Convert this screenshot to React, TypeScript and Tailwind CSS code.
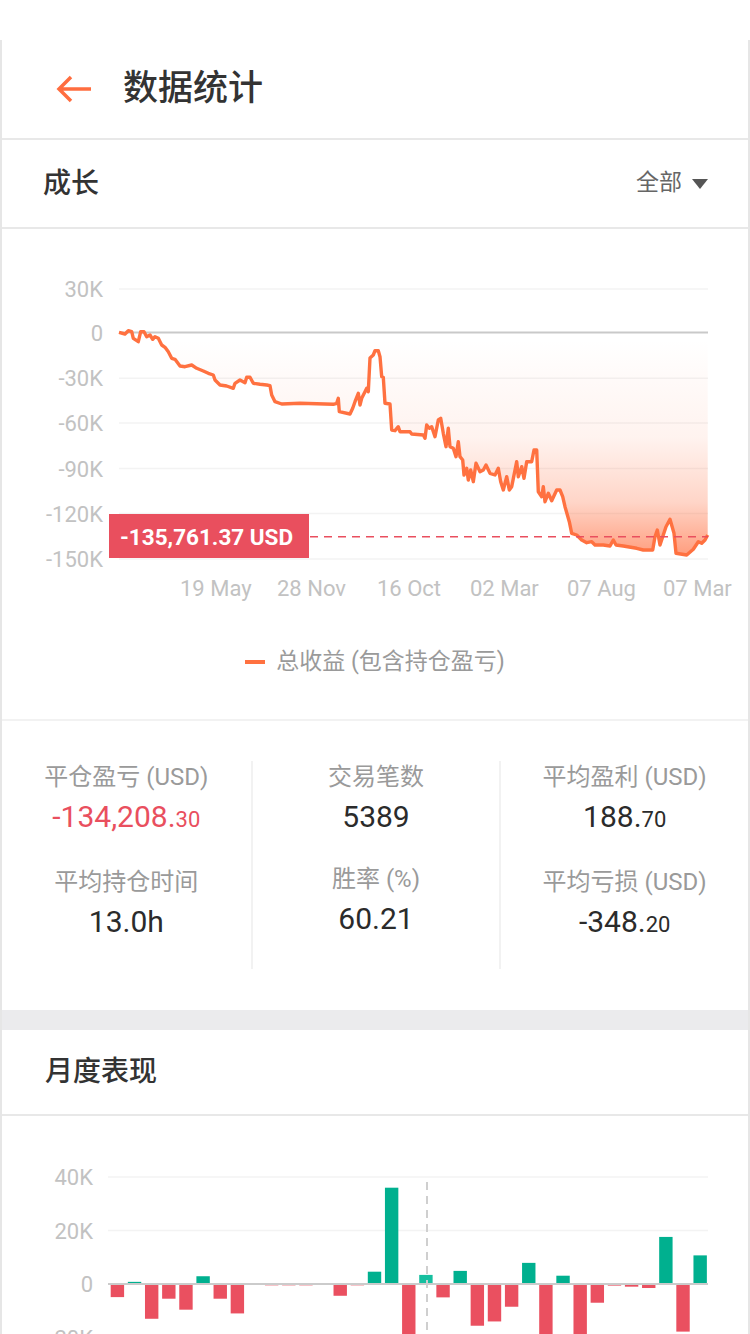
import React from 'react';

const linePoints: [number, number][] = [
  [119, 332.3], [125, 334], [128.3, 330.7], [131.7, 331.7], [133.3, 338.3], [138.3, 341.7], [140.7, 331.7],
  [144, 331.7], [146.7, 336.7], [150, 335], [152.7, 339.3], [155, 336.7], [158.3, 338.3], [161.7, 345],
  [165, 347.3], [168.3, 351.7], [171.7, 358.3], [175, 359.3], [180, 366], [185, 366.7], [191.7, 365],
  [196.7, 368.3], [203.3, 371], [208.3, 373.3], [213.3, 375], [215, 380], [220, 385], [226.7, 386],
  [233.3, 388.3], [235, 383.3], [240, 380], [245, 382.7], [246.7, 377.3], [250, 377.3], [253.3, 383.3],
  [260, 384.3], [266.7, 385], [270, 385.7], [271.7, 395], [275, 401.7], [281.7, 404], [300, 403.3],
  [333.3, 404.3], [336.7, 403.3], [338.3, 398.3], [339.3, 411.7], [350, 414], [352.7, 408.3], [355, 401.7],
  [358.3, 393.3], [360, 405], [361.7, 398.3], [365, 391.7], [366.7, 388.3], [368.3, 391.7], [370, 358],
  [373.3, 355], [375, 350.7], [378.3, 350.7], [380, 356.7], [381.7, 376.7], [383.3, 377.3], [385, 403.3],
  [390, 404], [391.7, 430], [395, 430.7], [398.3, 426.7], [400, 431.7], [410, 431.7], [411.7, 434],
  [423.3, 435], [425, 438.3], [426.7, 425], [429.3, 428.3], [431.7, 426.7], [435, 436.7], [438.3, 420],
  [440.7, 418.3], [443.3, 433.3], [446, 446.7], [448.3, 428.3], [450, 446.7], [453.3, 448.3], [456, 456.7],
  [458.3, 441.7], [460, 456.7], [462.7, 460], [464, 475], [466.7, 468.3], [468.3, 480], [470.7, 470],
  [473.3, 481.7], [476, 463.3], [480, 471.7], [483.3, 470], [486, 465], [490, 473.3], [495, 475],
  [498.3, 468.3], [500.7, 481.7], [503.3, 490], [506.7, 476.7], [509.3, 490], [511.7, 486.7], [516.7, 461.7],
  [518.3, 476.7], [521.7, 466.7], [524, 478.3], [526.7, 461.7], [531.7, 461.7], [534, 450], [536.7, 450],
  [538.3, 491.7], [541.7, 496.7], [543.3, 486.7], [545, 501.7], [548.3, 493.3], [551.7, 500.7], [556.7, 490],
  [560, 490], [562.7, 496.7], [565, 506.7], [569.3, 521.7], [571.7, 533.3], [576.7, 535], [581.7, 540],
  [586.7, 542.7], [591.7, 541.7], [595, 545], [603.3, 545], [610, 546], [613.3, 540], [616, 545],
  [623.3, 546], [636.7, 548.3], [643.3, 550], [652.7, 550], [655, 536.7], [657.3, 530], [660, 545],
  [662.7, 536.7], [666, 526.7], [670, 519.3], [674, 533.3], [676, 553.3], [686.7, 555], [693.3, 549.3],
  [698.3, 541.7], [701.7, 543.3], [705, 540], [707.7, 535],
];

const monthly = [
  -4.9, 0.8, -13, -5.5, -9.6, 2.9, -5.5, -11, -0.3, -0.5, -0.5, -0.5, -0.3, -4.4, -0.5, 4.6, 36, -25,
  3.4, -5, 4.9, -15.6, -14, -8.5, 7.9, -25, 3.1, -25, -7, -0.6, -1, -1.5, 17.6, -17.8, 10.7,
];

const linePath = linePoints.map(([x, y], i) => `${i === 0 ? 'M' : 'L'}${x} ${y}`).join(' ');
const areaPath = `${linePath} L707.7 332.5 L119 332.5 Z`;

function GrowthChart() {
  const yTicks = [
    { label: '30K', y: 289 },
    { label: '0', y: 332.5 },
    { label: '-30K', y: 378.3 },
    { label: '-60K', y: 423 },
    { label: '-90K', y: 468.5 },
    { label: '-120K', y: 513.5 },
    { label: '-150K', y: 559 },
  ];
  const xTicks = [
    { label: '19 May', x: 180 },
    { label: '28 Nov', x: 277 },
    { label: '16 Oct', x: 377 },
    { label: '02 Mar', x: 470 },
    { label: '07 Aug', x: 567 },
    { label: '07 Mar', x: 663 },
  ];

  return (
    <svg width="746" height="381" viewBox="2 229 746 381" className="block">
      <defs>
        <linearGradient id="area" x1="0" y1="340" x2="0" y2="556" gradientUnits="userSpaceOnUse">
          <stop offset="0" stopColor="#ff6a3a" stopOpacity="0" />
          <stop offset="0.45" stopColor="#ff6a3a" stopOpacity="0.08" />
          <stop offset="0.75" stopColor="#ff6a3a" stopOpacity="0.28" />
          <stop offset="1" stopColor="#ff6a3a" stopOpacity="0.66" />
        </linearGradient>
      </defs>
      {yTicks.map((t) => (
        <g key={t.label}>
          <line
            x1="119"
            x2="708"
            y1={t.y}
            y2={t.y}
            stroke={t.label === '0' ? '#c9c9c9' : '#f3f3f3'}
            strokeWidth={t.label === '0' ? 2 : 1.5}
          />
          <text x="103" y={t.y + 8} textAnchor="end" fontSize="22" fill="#c2c2c2">
            {t.label}
          </text>
        </g>
      ))}
      <path d={areaPath} fill="url(#area)" />
      <path d={linePath} fill="none" stroke="#ff7140" strokeWidth="3.4" strokeLinejoin="round" />
      <line x1="310" x2="708" y1="536.7" y2="536.7" stroke="#e94f5e" strokeWidth="1.5" strokeDasharray="8 6" />
      <rect x="109" y="514" width="200" height="44" fill="#e94f5e" />
      <text x="120" y="544.5" fontSize="22.5" fontWeight="700" fill="#ffffff">
        -135,761.37 USD
      </text>
      {xTicks.map((t) => (
        <text key={t.label} x={t.x} y="596" fontSize="22" fill="#c2c2c2">
          {t.label}
        </text>
      ))}
    </svg>
  );
}

function MonthlyChart() {
  const zero = 1284;
  const scale = 53.5 / 20;
  const ticks = [
    { label: '40K', y: 1177 },
    { label: '20K', y: 1230.5 },
    { label: '0', y: 1284 },
    { label: '-20K', y: 1337.5 },
  ];
  return (
    <svg width="746" height="240" viewBox="2 1116 746 240" className="block">
      {ticks.map((t) => (
        <g key={t.label}>
          {t.label !== '0' && (
            <line x1="108" x2="708" y1={t.y} y2={t.y} stroke="#f3f3f3" strokeWidth="1.5" />
          )}
          <text x="93" y={t.y + 8} textAnchor="end" fontSize="22" fill="#c2c2c2">
            {t.label}
          </text>
        </g>
      ))}
      {monthly.map((v, i) => {
        const h = Math.max(Math.abs(v) * scale, 1);
        const x = 110.7 + i * 17.14;
        return (
          <rect
            key={i}
            x={x}
            y={v >= 0 ? zero - h : zero}
            width="13.4"
            height={h}
            fill={v >= 0 ? (i === 18 ? '#16bf9f' : '#00b08f') : '#ea5060'}
          />
        );
      })}
      <line x1="108" x2="708" y1={zero} y2={zero} stroke="#cbcbcb" strokeWidth="2" />
      <line x1="427" x2="427" y1="1182" y2="1360" stroke="#cfcfcf" strokeWidth="2" strokeDasharray="8 6" />
    </svg>
  );
}

function Stat({ label, main, dec, red }: { label: string; main: string; dec?: string; red?: boolean }) {
  return (
    <div className="flex flex-col items-center">
      <div className="text-[24px] leading-[32px] text-[#9a9a9a]">{label}</div>
      <div className={`mt-1 text-[30px] leading-[40px] ${red ? 'text-[#e94f5e]' : 'text-[#2b2b2b]'}`}>
        {main}
        {dec && <span className="text-[22px]">{dec}</span>}
      </div>
    </div>
  );
}

export default function App() {
  return (
    <div className="w-[750px] h-[1334px] overflow-hidden bg-white pt-10 font-['Roboto','Noto_Sans_CJK_SC',sans-serif]">
      <div className="border-x-2 border-[#e6e6e6]">
        <div className="h-[100px] flex items-center pl-[53px] border-b-2 border-[#e8e8e8]">
          <svg width="38" height="30" viewBox="0 0 38 30">
            <path d="M4 15 H36 M16 3 L4 15 L16 27" fill="none" stroke="#ff6d3f" strokeWidth="3.5" strokeLinecap="butt" />
          </svg>
          <h1 className="ml-[30px] text-[35px] font-medium text-[#333333]">数据统计</h1>
        </div>

        <div className="h-[89px] flex items-center justify-between pl-[41px] pr-10 border-b-2 border-[#e8e8e8]">
          <span className="text-[28px] font-medium text-[#333333]">成长</span>
          <span className="flex items-center gap-[10px] text-[23px] text-[#666666]">
            全部
            <svg width="16" height="10" viewBox="0 0 16 10">
              <path d="M0 0 H16 L8 10 Z" fill="#555555" />
            </svg>
          </span>
        </div>

        <div className="border-b-2 border-[#f2f2f2]">
          <GrowthChart />
          <div className="h-[109px] flex items-center justify-center pb-[5px] gap-[11px]">
            <span className="w-[20px] h-[4px] bg-[#ff7140]" />
            <span className="text-[23px] text-[#9a9a9a]">总收益 (包含持仓盈亏)</span>
          </div>
        </div>

        <div className="grid grid-cols-3 pt-10 pb-[41px]">
          <div className="flex flex-col gap-[26px] h-[208px]">
            <Stat label="平仓盈亏 (USD)" main="-134,208." dec="30" red />
            <Stat label="平均持仓时间" main="13.0h" />
          </div>
          <div className="flex flex-col gap-[26px] h-[208px] border-l-2 border-[#f2f2f2]">
            <Stat label="交易笔数" main="5389" />
            <Stat label="胜率 (%)" main="60.21" />
          </div>
          <div className="flex flex-col gap-[26px] h-[208px] border-l-2 border-[#f2f2f2]">
            <Stat label="平均盈利 (USD)" main="188." dec="70" />
            <Stat label="平均亏损 (USD)" main="-348." dec="20" />
          </div>
        </div>

        <div className="h-5 bg-[#ebebed]" />

        <div className="h-[86px] flex items-center pl-[43px] border-b-2 border-[#e8e8e8]">
          <span className="text-[28px] font-medium text-[#333333]">月度表现</span>
        </div>

        <MonthlyChart />
      </div>
    </div>
  );
}
